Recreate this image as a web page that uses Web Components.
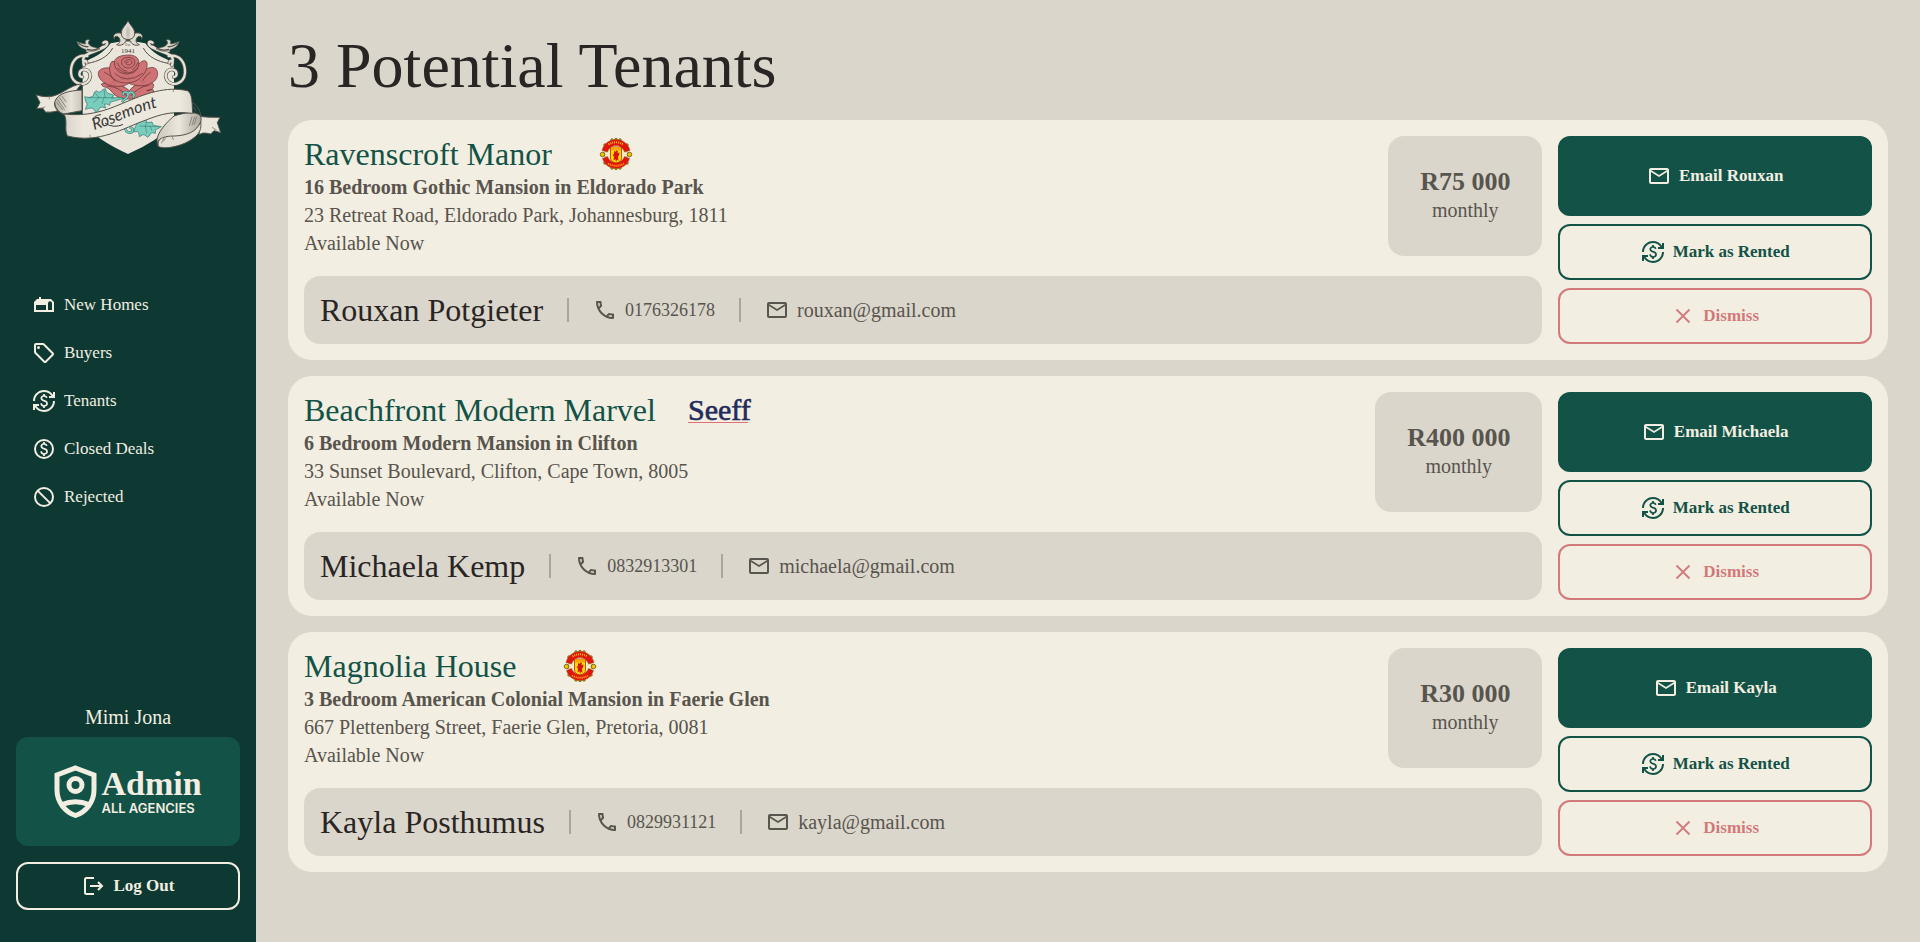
<!DOCTYPE html>
<html lang="en">
<head>
<meta charset="utf-8">
<meta name="viewport" content="width=device-width, initial-scale=1">
<title>Rosemont – Potential Tenants</title>
<style>
:root {
  --forest: #0d3932;
  --green: #125247;
  --cream: #f2eee1;
  --stone: #dad6cb;
  --ink: #2a2525;
  --muted: #58544e;
  --rose: #d3797b;
  --text-s: 17px;
  --text-phone: 18px;
  --text-m: 20px;
  --text-price: 26px;
  --text-l: 32px;
  --text-xl: 64px;
}
body { margin: 0; background: var(--stone); color: var(--muted); font: 20px/28px "Liberation Serif", serif; }
</style>
</head>
<body>
<rosemont-app>
  <side-bar slot="side">
    <nav-item icon="house" href="#new">New Homes</nav-item>
    <nav-item icon="tag" href="#buyers">Buyers</nav-item>
    <nav-item icon="exchange" href="#tenants">Tenants</nav-item>
    <nav-item icon="paid" href="#closed">Closed Deals</nav-item>
    <nav-item icon="block" href="#rejected">Rejected</nav-item>
    <user-panel slot="user" name="Mimi Jona"></user-panel>
  </side-bar>
  <tenant-card title-text="Ravenscroft Manor" agency="united" price="R75 000" person="Rouxan Potgieter" phone="0176326178" email="rouxan@gmail.com">
    <b slot="summary">16 Bedroom Gothic Mansion in Eldorado Park</b>
    <span slot="address">23 Retreat Road, Eldorado Park, Johannesburg, 1811</span>
  </tenant-card>
  <tenant-card title-text="Beachfront Modern Marvel" agency="seeff" price="R400 000" person="Michaela Kemp" phone="0832913301" email="michaela@gmail.com">
    <b slot="summary">6 Bedroom Modern Mansion in Clifton</b>
    <span slot="address">33 Sunset Boulevard, Clifton, Cape Town, 8005</span>
  </tenant-card>
  <tenant-card title-text="Magnolia House" agency="united" price="R30 000" person="Kayla Posthumus" phone="0829931121" email="kayla@gmail.com">
    <b slot="summary">3 Bedroom American Colonial Mansion in Faerie Glen</b>
    <span slot="address">667 Plettenberg Street, Faerie Glen, Pretoria, 0081</span>
  </tenant-card>
</rosemont-app>

<script>
const DOLLAR = 'M12.89 11.1c-1.78-.59-2.64-.96-2.64-1.9 0-1.02 1.11-1.39 1.81-1.39 1.31 0 1.79.99 1.9 1.34l1.58-.67c-.15-.44-.82-1.91-2.66-2.23V5h-1.75v1.26c-2.6.56-2.62 2.85-2.62 2.96 0 2.27 2.25 2.91 3.35 3.31 1.58.56 2.28 1.07 2.28 2.03 0 1.13-1.05 1.61-1.98 1.61-1.82 0-2.34-1.87-2.4-2.09l-1.66.67c.63 2.19 2.28 2.78 3.02 2.96V19h1.75v-1.24c.52-.09 3.02-.59 3.02-3.22.01-1.39-.6-2.61-3-3.44z';
const ICONS = {
  house: '<path fill-rule="evenodd" d="M2 19V9l3-3h2V4h2v2h10l3 3v10zM4 12v5h10v-5zM16 17h4v-6.500a2 2.200 0 0 0-4 0z"/>',
  tag: '<path fill-rule="evenodd" d="M21.41 11.580l-9-9A2 2 0 0 0 11 2H4a2 2 0 0 0-2 2v7a2 2 0 0 0 .59 1.420l9 9A2 2 0 0 0 13 22a2 2 0 0 0 1.410-.59l7-7A2 2 0 0 0 22 13a2 2 0 0 0-.59-1.420zM13 20.010L4 11V4h7l9 9z"/><circle cx="6.500" cy="6.500" r="1.500"/>',
  exchange: `<path d="${DOLLAR}"/><path d="M3 21H1v-6h6v2H4.520c1.610 2.410 4.360 4 7.480 4 4.970 0 9-4.030 9-9h2c0 6.080-4.920 11-11 11-3.720 0-7.010-1.850-9-4.670V21zm-2-9C1 5.920 5.920 1 12 1c3.720 0 7.010 1.850 9 4.670V3h2v6h-6V7h2.480C17.870 4.590 15.120 3 12 3c-4.970 0-9 4.030-9 9H1z"/>`,
  paid: `<path d="${DOLLAR}"/><circle cx="12" cy="12" r="9" fill="none" stroke="currentColor" stroke-width="2"/>`,
  block: '<g fill="none" stroke="currentColor" stroke-width="2"><circle cx="12" cy="12" r="9"/><path d="M5.600 5.600l12.800 12.800"/></g>',
  phone: '<path d="M6.540 5c.06.89.21 1.760.45 2.590l-1.200 1.200c-.41-1.200-.67-2.470-.76-3.790h1.510m9.860 12.020c.85.24 1.720.39 2.600.45v1.490c-1.320-.09-2.590-.35-3.800-.75l1.200-1.190M7.500 3H4c-.55 0-1 .45-1 1 0 9.390 7.610 17 17 17 .55 0 1-.45 1-1v-3.490c0-.55-.45-1-1-1-1.240 0-2.450-.2-3.570-.57-.1-.04-.21-.05-.31-.05-.26 0-.51.1-.71.29l-2.200 2.200c-2.830-1.450-5.150-3.760-6.590-6.590l2.200-2.200c.28-.28.36-.67.25-1.020C8.700 6.450 8.500 5.250 8.500 4c0-.55-.45-1-1-1z"/>',
  mail: '<path d="M22 6c0-1.100-.9-2-2-2H4c-1.100 0-2 .9-2 2v12c0 1.100.9 2 2 2h16c1.100 0 2-.9 2-2V6zm-2 0l-8 5-8-5h16zm0 12H4V8l8 5 8-5v10z"/>',
  close: '<path d="M5.500 5.500l13 13M18.500 5.500l-13 13" fill="none" stroke="currentColor" stroke-width="1.800"/>',
  logout: '<path d="M12 4H4.500Q3 4 3 5.500v13Q3 20 4.500 20H12M8 12h12M16 8l4 4-4 4" fill="none" stroke="currentColor" stroke-width="2"/>'
};

const CREST = `<svg viewBox="0 0 64 64" role="img" aria-label="United crest">
  <circle cx="32" cy="32" r="23" fill="#f6e9c8" stroke="#8c7a10" stroke-width="1"/>
  <g fill="#f4c400" stroke="#5a4a10" stroke-width="1.500">
    <circle cx="5" cy="33" r="4.500"/><circle cx="59" cy="33" r="4.500"/>
    <circle cx="24" cy="4" r="2.500"/><circle cx="32" cy="3" r="2.500"/><circle cx="40" cy="4" r="2.500"/>
    <circle cx="24" cy="60" r="2.500"/><circle cx="32" cy="61" r="2.500"/><circle cx="40" cy="60" r="2.500"/>
    <circle cx="10" cy="14" r="2.500"/><circle cx="54" cy="14" r="2.500"/><circle cx="10" cy="50" r="2.500"/><circle cx="54" cy="50" r="2.500"/>
  </g>
  <g fill="#e2150d" stroke="#8c5a10" stroke-width="1">
    <path d="M4 25C8 10 20 3 32 3s24 7 28 22l-11 3C46 20 40 15 32 15s-14 5-17 13z"/>
    <path d="M5 41c4 13 15 20 27 20s23-7 27-20l-10-4c-3 8-9 12-17 12s-14-4-17-12z"/>
  </g>
  <path d="M17 13q15-9 30 0M16 51q16 9 32 0" fill="none" stroke="#ffb81a" stroke-width="4" stroke-dasharray="2 2"/>
  <path d="M21 18h22v22q0 8-11 10-11-2-11-10z" fill="#ffdc00" stroke="#b3200c" stroke-width="1.500"/>
  <path d="M22 19h20v6H22z" fill="#f6a800"/>
  <path d="M28 25l2 3 3-3 3 1-1 4 4-1-1 6-2 2 1 9-3-3-2 6-1-7-4 3 1-8-3-3 3-2z" fill="#d8140c"/>
</svg>`;

const SEEFF = `<svg viewBox="0 0 64 32" role="img" aria-label="Seeff">
  <text x="0" y="26" font-family="Liberation Serif, serif" font-size="30" fill="#232a5c" stroke="#232a5c" stroke-width=".6">Seeff</text>
  <path d="M0 28.500h60" stroke="#e07078" stroke-width="1"/>
</svg>`;

/* Rosemont coat of arms: scrolls, shield, rose, leaves and name ribbon */
const scroll = `<g fill="none" stroke-linecap="round">
  <g stroke="#55524b" stroke-width="11">
    <path d="M262 168c-34-6-50 20-49 50 2 34 40 44 54 22 10-18-2-34-18-31-14 3-14 22-2 22"/>
    <path d="M252 196c-6-14 6-18 8-8M250 184c-6-24 30-24 62-42 16-12 10-22-2-14"/>
    <path d="M262 152c14 6 34 0 48-12"/>
  </g>
  <g stroke="#e6e2d7" stroke-width="7">
    <path d="M262 168c-34-6-50 20-49 50 2 34 40 44 54 22 10-18-2-34-18-31-14 3-14 22-2 22"/>
    <path d="M252 196c-6-14 6-18 8-8M250 184c-6-24 30-24 62-42 16-12 10-22-2-14"/>
    <path d="M262 152c14 6 34 0 48-12"/>
  </g>
  <path d="M231 125c14 4 20 8 27 6-6-8 0-14 12-11-8 6-6 14 6 20l24 6c-20 12-40 8-44 2-12-4-22-10-25-23z" fill="#dedacf" stroke="#55524b" stroke-width="2"/>
  <path d="M236 130q16 12 28 10M262 148q18 6 32-2" stroke="#55524b" stroke-width="4"/>
</g>`;
const LOGO = `<svg viewBox="0 0 768 540" role="img" aria-label="Rosemont, established 1941">
  <defs>
    <linearGradient id="foldLeft"><stop offset="0" stop-color="#b5b1a7"/><stop offset=".6" stop-color="#e8e4da"/><stop offset="1" stop-color="#c9c5ba"/></linearGradient>
    <linearGradient id="foldRight"><stop offset="0" stop-color="#cbc7bc"/><stop offset=".5" stop-color="#ebe7dd"/><stop offset="1" stop-color="#aaa69c"/></linearGradient>
    <linearGradient id="band"><stop offset="0" stop-color="#d8d4c9"/><stop offset=".15" stop-color="#ece8de"/><stop offset=".9" stop-color="#ece8de"/><stop offset="1" stop-color="#dcd8cd"/></linearGradient>
  </defs>
  <path d="M248 188c34-16 60-26 84-58q52-12 104 0c24 32 50 42 86 58v184q-50 52-138 90-90-40-136-92z" fill="#eae6dc"/>
  <g>${scroll}</g><g transform="translate(768 0) scale(-1 1)">${scroll}</g>
  <path d="M247 330V256M264 190c30-6 60-18 74-46M504 190c-30-6-60-18-74-46" fill="none" stroke="#55524b" stroke-width="3"/>
  <g fill="#dedacf" stroke="#55524b" stroke-width="3" stroke-linejoin="round">
    <path d="M350 134c10-2 14-16 4-24-8-4-14 4-10 8-12-16 12-26 26-14 8 8 10 14 14 18 4-4 6-10 14-18 14-12 38-2 26 14 4-4-2-12-10-8-10 8-6 22 4 24-14 6-28-4-30-18l-4 8-4-8c-2 14-16 24-30 18z"/>
    <path d="M384 62c6 14 20 22 20 38q0 14-14 18h-12q-14-4-14-18c0-16 14-24 20-38z"/>
    <path d="M384 76q-12 24 0 42 12-18 0-42z" fill="#c7c2b7" stroke="none"/>
  </g>
  <text x="384" y="137" text-anchor="middle" font-family="Liberation Serif, serif" font-size="11" fill="#55524b">Est.</text>
  <text x="384" y="160" text-anchor="middle" font-family="Liberation Serif, serif" font-size="21" fill="#3a3733">1941</text>

  <g fill="#cf7274" stroke="#5c2d31" stroke-width="2" stroke-linejoin="round">
    <path d="M304 252c20-8 60-2 84 20 20-24 50-34 72-20 4 12-6 20-20 20 16-6 24-4 20 4-20 20-60 24-84 20-34-2-40-24-50-30-8-6-20-4-22-14z"/>
    <path d="M340 206c-18-6-42-2-45 12-2 14 12 32 36 38 22 6 42 4 56-6 20 10 54 10 70-2 18-10 20-34 10-42-10-8-26-2-34 6z"/>
    <path d="M336 184c-12 12-10 50 14 58 20 12 52 8 68-6 16-12 28-34 22-50-6-8-16-2-22 4z"/>
    <path d="M344 182c-4 20 10 40 36 40 24 0 40-16 36-40-4-14-20-18-34-17-18 1-34 6-38 17z"/>
    <path d="M366 180c4-10 32-12 38 2 2 14-8 22-20 22-14 0-22-12-18-24z"/>
    <path d="M374 188c0-12 22-12 22-2s-16 12-18 4q0-6 8-4" fill="none"/>
    <path d="M352 204q30 30 62 0M344 220q36 34 84 0M312 216q20 8 34 28M452 216q-14 8-24 26M320 258q40 2 62 32M446 256q-30 4-54 32M352 188q8 22 30 26M414 188q-6 16-18 22" fill="none"/>
  </g>
  <g fill="none" stroke="#8f4a4e" stroke-width="1"><path d="M360 228l8 12M368 228l8 12M376 230l8 10M386 230l6 8M396 228l6 8M334 250l14-10M342 254l14-10M430 250l-10-10M438 248l-10-10"/></g>

  <g fill="#78cdbd" stroke="#2f6f68" stroke-width="2" stroke-linejoin="round">
    <path d="M254 290q14 6 26-2 0-10 8-16 8 6 14 4 6-10 14-10 2 10 8 14 8 2 18 6-4 6-8 8l32-2 2 4-36 10-4 10q-8-6-14-4 0 8 4 12-10-4-18-2-4 10-12 16-4-10-12-14-10 0-20 4 4-10 6-16-6-6-8-22z"/>
    <path d="M410 372q10-12 22-20l10 16 14-2 4 10 24 4-18 10v10q-10-4-14 0-2 8-10 12-6-10-14-8-6 4-10 6 0-12-6-16l-12 2z"/>
  </g>
  <g fill="none" stroke="#2f6f68" stroke-width="1.500"><path d="M262 293l80 0M284 277l14 17M312 270l4 24M280 308l18-16M306 312l6-20M418 378l58 2M440 362l-4 18M440 400l-4-22M456 392l-6-14"/></g>
  <g fill="none" stroke-linecap="round"><path d="M370 284c-2-12 16-10 14 2-2 10-12 10-16 18M384 282c12-12 22 0 16 8M384 364c-16 12-8 34 6 34 12-2 10-16 2-14" stroke="#2f6f68" stroke-width="8"/>
  <path d="M370 284c-2-12 16-10 14 2-2 10-12 10-16 18M384 282c12-12 22 0 16 8M384 364c-16 12-8 34 6 34 12-2 10-16 2-14" stroke="#78cdbd" stroke-width="5"/></g>

  <g stroke="#55524b" stroke-width="3" stroke-linejoin="round">
    <path d="M244 252c-34 2-62 38-100 38-14 0-26-2-36-6l12 24-10 18 18-2 8 12c20 2 34-2 50-8z" fill="#eae6dc"/>
    <path d="M246 270c-40 2-74 10-82 36-4 20 14 32 28 36l54-10z" fill="url(#foldLeft)"/>
    <path d="M592 348c22 4 48 4 68 4l-8 16 10 30-20-6-10 10c-18-4-26-4-34 2z" fill="#eae6dc"/>
    <path d="M522 348c30-10 66-16 80 0 8 26-16 48-46 60-24 14-44 4-72 8-12 4-14 14-8 24-18-28 16-66 46-92z" fill="url(#foldRight)"/>
    <path d="M602 366c-14 32-44 40-78 42-34 0-56 8-48 32 20 8 54 0 78-10 40-20 52-36 48-64z" fill="#e4e0d5"/>
    <path d="M192 342c70 8 120-8 176-32 70-30 130-52 194-38 16 8 14 40 16 68-60-6-90 0-140 20-68 24-140 72-236 48-10-20 2-44-10-66z" fill="url(#band)"/>
    <path d="M164 308q2 24 30 38M578 308q20 12 26 42" fill="none"/>
  </g>
  <g fill="none" stroke="#6b675f" stroke-width="2"><path d="M170 306l18 24M172 298l22 32M178 292l20 30M186 288l12 18M582 320l6 14M590 350l-8 24M584 350l-8 26M576 350l-8 28M490 424l8-12M484 430l8-16M148 286v12M124 326l12-6M650 390l-14-8M516 408l4 12M270 412v-8M520 268v8"/></g>
  <path id="ribbon" d="M282 390C350 370 410 334 496 316" fill="none"/>
  <text font-family="Lato, sans-serif" font-style="italic" font-size="49" fill="#3b3936"><textPath href="#ribbon">Rosemont</textPath></text>
  <path d="M278 360q2-14 24-16M316 370q24 16 52 4" fill="none" stroke="#3b3936" stroke-width="3" stroke-linecap="round"/>
</svg>`;

function define(name, render) {
  customElements.define(name, class extends HTMLElement {
    constructor() { super(); this.attachShadow({ mode: 'open' }); }
    connectedCallback() {
      if (this.shadowRoot.firstChild) return;
      const tpl = document.createElement('template');
      tpl.innerHTML = render(this);
      this.shadowRoot.append(tpl.content.cloneNode(true));
    }
  });
}
const attr = (el, name) => el.getAttribute(name) || '';

define('ui-icon', el => `
<style>:host{display:block;width:24px;height:24px;flex:none}svg{display:block;width:100%;height:100%;fill:currentColor}</style>
<svg viewBox="0 0 24 24" aria-hidden="true">${ICONS[attr(el, 'name')]}</svg>`);

define('ui-button', el => `
<style>
:host{display:flex;min-height:48px}
button{flex:1;box-sizing:border-box;display:flex;align-items:center;justify-content:center;gap:8px;margin:0;padding:8px;
  border:2px solid currentColor;border-radius:12px;background:transparent;color:var(--green);font:bold var(--text-s)/24px "Liberation Serif",serif;cursor:pointer}
:host([kind=primary]) button{background:var(--green);border-color:var(--green);color:var(--cream)}
:host([kind=light]) button{color:var(--cream)}
:host([kind=danger]) button{color:var(--rose)}
</style>
<button type="button"><ui-icon name="${attr(el, 'icon')}"></ui-icon><slot></slot></button>`);

define('nav-item', el => `
<style>
:host{display:block}
a{display:flex;align-items:center;gap:8px;height:48px;padding:0 16px;color:var(--cream);font-size:var(--text-s);text-decoration:none}
</style>
<a href="${attr(el, 'href')}"><ui-icon name="${attr(el, 'icon')}"></ui-icon><slot></slot></a>`);

define('user-panel', el => `
<style>
:host{display:flex;flex-direction:column;color:var(--cream);text-align:center}
.name{line-height:24px;margin-bottom:8px}
.role{display:flex;align-items:center;justify-content:center;gap:4px;padding:28px 16px;margin-bottom:16px;border-radius:12px;background:var(--green)}
svg{display:block;width:43px;height:53px;flex:none}
.label{display:flex;flex-direction:column;text-align:left}
strong{font-size:34px;line-height:32px}
small{font:600 13px/16px Inter,sans-serif}
</style>
<div class="name">${attr(el, 'name')}</div>
<div class="role">
  <svg viewBox="0 0 43 53" aria-hidden="true" fill="none" stroke="currentColor"><path d="M21.500 3L40 10v15c0 12-8 22-18.500 25.500C11 47 3 37 3 25V10z" stroke-width="5"/><circle cx="21.500" cy="20" r="6.500" stroke-width="5"/><path d="M8 39.500q13.500-5.500 27 0" stroke-width="5"/></svg>
  <div class="label"><strong>Admin</strong><small>ALL AGENCIES</small></div>
</div>
<ui-button kind="light" icon="logout">Log Out</ui-button>`);

define('side-bar', () => `
<style>
:host{box-sizing:border-box;display:flex;flex-direction:column;height:100vh;min-height:760px;position:sticky;top:0;background:var(--forest)}
svg{display:block;width:100%}
nav{padding:101px 16px 32px}
footer{margin-top:auto;padding:0 16px 32px}
</style>
${LOGO}
<nav aria-label="Main"><slot></slot></nav>
<footer><slot name="user"></slot></footer>`);

define('contact-bar', el => `
<style>
:host{display:flex;align-items:center;gap:24px;padding:16px;border-radius:16px;background:var(--stone)}
h3{margin:0;font-size:var(--text-l);line-height:36px;font-weight:400;color:var(--ink)}
i{width:2px;height:24px;background:#aaa69d}
a{display:flex;align-items:center;gap:8px;color:inherit;text-decoration:none;font-size:var(--text-m)}
.phone{font-size:var(--text-phone)}
</style>
<h3>${attr(el, 'person')}</h3><i></i>
<a class="phone" href="tel:${attr(el, 'phone')}"><ui-icon name="phone"></ui-icon>${attr(el, 'phone')}</a><i></i>
<a href="mailto:${attr(el, 'email')}"><ui-icon name="mail"></ui-icon>${attr(el, 'email')}</a>`);

define('tenant-card', el => `
<style>
:host{display:grid;grid-template-columns:minmax(0,1fr) 20%;gap:16px;padding:16px;border-radius:24px;background:var(--cream)}
.info{display:flex;flex-direction:column;justify-content:space-between}
.top{display:flex;justify-content:space-between;align-items:flex-start;gap:16px}
.home{display:flex;flex-direction:column}
header{display:flex;align-items:center;gap:32px;margin-bottom:1px}
h2{margin:0;font-size:var(--text-l);line-height:36px;font-weight:400;color:var(--green)}
header svg{display:block;width:64px;height:32px}
.price{display:flex;flex-direction:column;justify-content:center;align-items:center;height:120px;padding:0 32px;border-radius:16px;background:var(--stone)}
.price b{font-size:var(--text-price)}
.actions{display:grid;grid-template-rows:80px 56px 56px;gap:8px}
</style>
<div class="info">
  <div class="top">
    <div class="home">
      <header><h2>${attr(el, 'title-text')}</h2>${attr(el, 'agency') === 'seeff' ? SEEFF : CREST}</header>
      <slot name="summary"></slot><slot name="address"></slot><span>Available Now</span>
    </div>
    <div class="price"><b>${attr(el, 'price')}</b><span>monthly</span></div>
  </div>
  <contact-bar person="${attr(el, 'person')}" phone="${attr(el, 'phone')}" email="${attr(el, 'email')}"></contact-bar>
</div>
<div class="actions">
  <ui-button kind="primary" icon="mail">Email ${attr(el, 'person').split(' ')[0]}</ui-button>
  <ui-button icon="exchange">Mark as Rented</ui-button>
  <ui-button kind="danger" icon="close">Dismiss</ui-button>
</div>`);

define('rosemont-app', el => `
<style>
:host{display:grid;grid-template-columns:256px minmax(0,1fr);align-items:start;min-height:100vh}
main{padding:32px}
h1{margin:0 0 20px;font-size:var(--text-xl);line-height:68px;font-weight:400;color:var(--ink)}
.list{display:flex;flex-direction:column;gap:16px}
</style>
<slot name="side"></slot>
<main><h1>${el.querySelectorAll('tenant-card').length} Potential Tenants</h1><div class="list"><slot></slot></div></main>`);
</script>
</body>
</html>
